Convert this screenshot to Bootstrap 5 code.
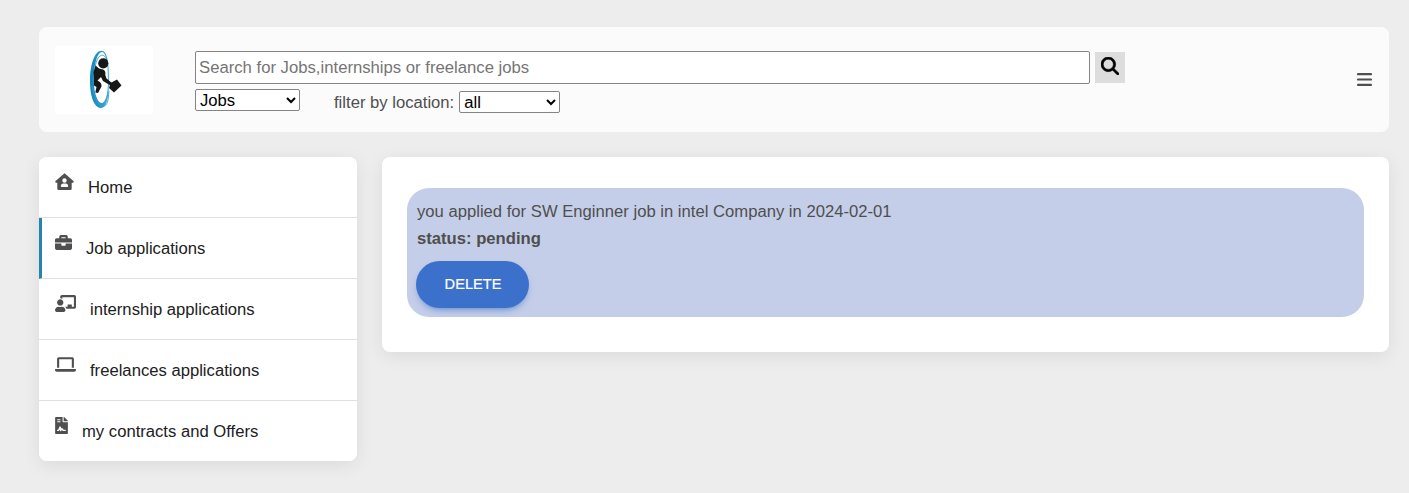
<!DOCTYPE html>
<html lang="en">
<head>
<meta charset="utf-8">
<meta name="viewport" content="width=device-width, initial-scale=1">
<title>Job applications</title>
<link href="https://cdn.jsdelivr.net/npm/bootstrap@5.3.0/dist/css/bootstrap.min.css" rel="stylesheet">
<script src="https://cdn.jsdelivr.net/npm/bootstrap@5.3.0/dist/js/bootstrap.bundle.min.js" defer></script>
<style>
body{background:#ededed;color:#4f4f4f;font:16.65px/26.6px "Liberation Sans",Arial,sans-serif;padding:27px 20px 0 39px;min-height:100vh}
.topbar{height:105px;background:#fbfbfb;border-radius:8px;padding:0 16px}
.logo{width:98px;height:68px;background:#fff;margin-top:19px}
.finder{margin:24px 0 0 42px;width:930px}
.finder input{width:895px;height:33px;border:1px solid #858585;border-radius:2px;padding:0 3px;color:#000;background:#fff;font-size:16.7px}
.finder input::placeholder{color:#757575;opacity:1}
.finder button{width:30px;height:31px;background:#ddd}
.finder select{height:22px;border:1px solid #858585;border-radius:2px;background:#fff;color:#000;padding:0;line-height:20px}
.kind{width:105px;margin-top:5px}
.place{width:101px;margin-left:5px}
.filter{margin:4px 0 0 34px}
.filter span{padding-top:2px}
.burger{margin-top:46px;width:15px;height:13px;margin-right:1px}
.content-row{margin-top:25px;gap:25px}
.side{width:318px;border-radius:8px;box-shadow:0 4px 18px rgba(0,0,0,.08);background:#fff;overflow:hidden}
.side .list-group-item{height:61px;padding:2px 0 0 16px;border:0;border-bottom:1px solid #e0e0e0;color:#212121;background:#fff;border-radius:0}
.side .list-group-item:last-child{height:60px;border-bottom:0}
.side .current{border-left:3px solid #2584ab;padding-left:13px}
.side svg{margin:0 14px 14px 0;height:17px;fill:#4f4f4f;flex:none}
.panel{height:195px;border-radius:8px;box-shadow:0 4px 18px rgba(0,0,0,.08);padding:31px 25px}
.notice{height:129px;background:#c5cee8;border-radius:22px;padding:11px 10px 10px}
.btn-delete{width:113px;height:47px;margin:9px 0 0 -1px;padding:0 0 0 1px;background:#3b71ca;color:#fff;font-size:14.6px;-webkit-text-stroke:.2px #fff;border-radius:24px;box-shadow:0 4px 9px -4px #3b71ca}
</style>
</head>
<body>
<header class="topbar d-flex align-items-start">
  <svg class="logo" viewBox="0 0 98 68" aria-label="Logo">
    <defs><linearGradient id="ring" x1="0" x2="1"><stop stop-color="#0f83bb"/><stop offset="1" stop-color="#40aed8"/></linearGradient></defs>
    <path fill="url(#ring)" fill-rule="evenodd" d="M46.500 4.700C40 4.700 35 18 35 35s5 27 11 27S54 50 54 34 52.500 4.700 46.500 4.700ZM47 6C51 6 53 18 53 34S50 57 46.500 57 38.800 48 38.800 34 42 6 47 6Z"/>
    <path fill="none" stroke="#2f9fce" stroke-width=".9" d="M40 22C42 6 51 6 52.500 17M37 40C40 53 43 60 48 60S53 54 54 45"/>
    <circle cx="48.300" cy="17.300" r="5.100" fill="#171717"/>
    <path fill="#171717" d="M40.500 19.500 44 22.500 48 23.500Q51 24.500 50.300 29L51.500 32.500 57 37 55.500 39.500 48 35 46 31 42.500 34.500Q47 36.500 46.500 40.500L43 47 40.300 46.500 41.500 41 39 39.500 38.500 26Z"/>
    <path fill="#171717" d="m55.500 37 6.500-3.500 4.500 6-7.500 7-5-4.500Z"/>
  </svg>
  <div class="finder">
    <div class="d-flex align-items-center">
      <input type="text" placeholder="Search for Jobs,internships or freelance jobs" aria-label="Search">
      <button class="border-0 p-0 d-flex align-items-center justify-content-center ms-auto" aria-label="Search">
        <svg width="18" height="18" viewBox="0 0 512 512" class="mb-1"><path stroke="#000" stroke-width="16" d="M416 208c0 45.900-14.900 88.300-40 122.700L502.600 457.400c12.500 12.500 12.500 32.800 0 45.300s-32.800 12.500-45.300 0L330.700 376c-34.400 25.200-76.800 40-122.700 40C93.100 416 0 322.900 0 208S93.100 0 208 0s208 93.100 208 208zM208 352a144 144 0 1 0 0-288 144 144 0 1 0 0 288z"/></svg>
      </button>
    </div>
    <div class="d-flex align-items-start">
      <select class="kind" aria-label="Kind"><option>Jobs</option></select>
      <label class="d-flex align-items-center filter"><span>filter by location:</span><select class="place"><option>all</option></select></label>
    </div>
  </div>
  <svg class="burger ms-auto" viewBox="0 0 15 13"><path d="M1 1.200h13M1 6.500h13M1 11.800h13" stroke="#4f4f4f" stroke-width="2.200" stroke-linecap="round"/></svg>
</header>
<div class="content-row d-flex align-items-start">
  <nav class="side list-group">
    <a href="#" class="list-group-item d-flex align-items-center"><svg width="19" viewBox="0 0 19 17"><path fill-rule="evenodd" d="M9.500.3.300 8.200q-.3 1.500 1 1.500H2.300V15.500q0 1.500 1.500 1.500h11.400q1.500 0 1.500-1.500V9.700h1q1.300 0 1-1.500ZM9.500 5.300a2.200 2.200 0 1 1 0 4.400 2.200 2.200 0 0 1 0-4.400ZM8.300 10.600h2.400q2.300 0 2.500 2.700 0 .8-.8.800H6.600q-.8 0-.8-.8.200-2.700 2.500-2.700Z"/></svg>Home</a>
    <a href="#" class="list-group-item current d-flex align-items-center"><svg width="17" viewBox="0 0 512 512"><path d="M320 336c0 8.800-7.200 16-16 16h-96c-8.800 0-16-7.200-16-16v-48H0v144c0 25.600 22.400 48 48 48h416c25.600 0 48-22.400 48-48V288H320v48zm144-208h-80V80c0-25.600-22.400-48-48-48H176c-25.600 0-48 22.400-48 48v48H48c-25.600 0-48 22.400-48 48v80h512v-80c0-25.600-22.400-48-48-48zm-144 0H192V96h128v32z"/></svg>Job applications</a>
    <a href="#" class="list-group-item d-flex align-items-center"><svg width="21" viewBox="0 0 640 512"><path d="M208 352c-2.400 0-4.800.4-7.100 1.100C188 357.300 174.400 360 160 360s-28-2.700-41-6.900c-2.200-.7-4.600-1.100-7-1.100C49.900 352-.3 402.500 0 464.600.1 490.900 21.700 512 48 512h224c26.300 0 47.900-21.100 48-47.400.3-62.100-49.900-112.600-112-112.600zm-48-32c53 0 96-43 96-96s-43-96-96-96-96 43-96 96 43 96 96 96zM592 0H208c-26.500 0-48 22.300-48 49.600V96c23.400 0 45.100 6.800 64 17.800V64h352v288h-64v-64H384v64h-76.200c19.100 16.700 33.100 38.700 39.700 64H592c26.500 0 48-22.200 48-49.600V49.600C640 22.200 618.500 0 592 0z"/></svg>internship applications</a>
    <a href="#" class="list-group-item d-flex align-items-center"><svg width="21" viewBox="0 0 640 512"><path d="M128 32c-35.300 0-64 20-64 48v272h64V96h384v256h64V80c0-28-28.700-48-64-48H128zM8 390Q0 390 0 400v24q0 54 54 54h532q54 0 54-54v-24q0-10-8-10Z"/></svg>freelances applications</a>
    <a href="#" class="list-group-item d-flex align-items-center"><svg width="13" viewBox="0 0 384 512"><path fill-rule="evenodd" d="M224 136V0H24C10.700 0 0 10.700 0 24v464c0 13.300 10.700 24 24 24h336c13.300 0 24-10.700 24-24V160H248c-13.200 0-24-10.800-24-24zM64 64h96v32H64V64zm0 64h96v32H64v-32zM56 385h36l37-90q18-28 39 0l26 53q23-26 47 8l13 29h66v38h-82q-17 0-24-14l-14-26-16 35q-16 20-34 0l-16-41-18 42h-60ZM377 105 279 7C274.500 2.500 268.400 0 262 0h-6v128h128v-6.100c0-6.300-2.500-12.400-7-16.900z"/></svg>my contracts and Offers</a>
  </nav>
  <main class="panel bg-white flex-grow-1">
    <section class="notice">
      <div>you applied for SW Enginner job in intel Company in 2024-02-01</div>
      <div class="fw-bold">status: pending</div>
      <button class="btn-delete border-0 d-block">DELETE</button>
    </section>
  </main>
</div>
</body>
</html>
